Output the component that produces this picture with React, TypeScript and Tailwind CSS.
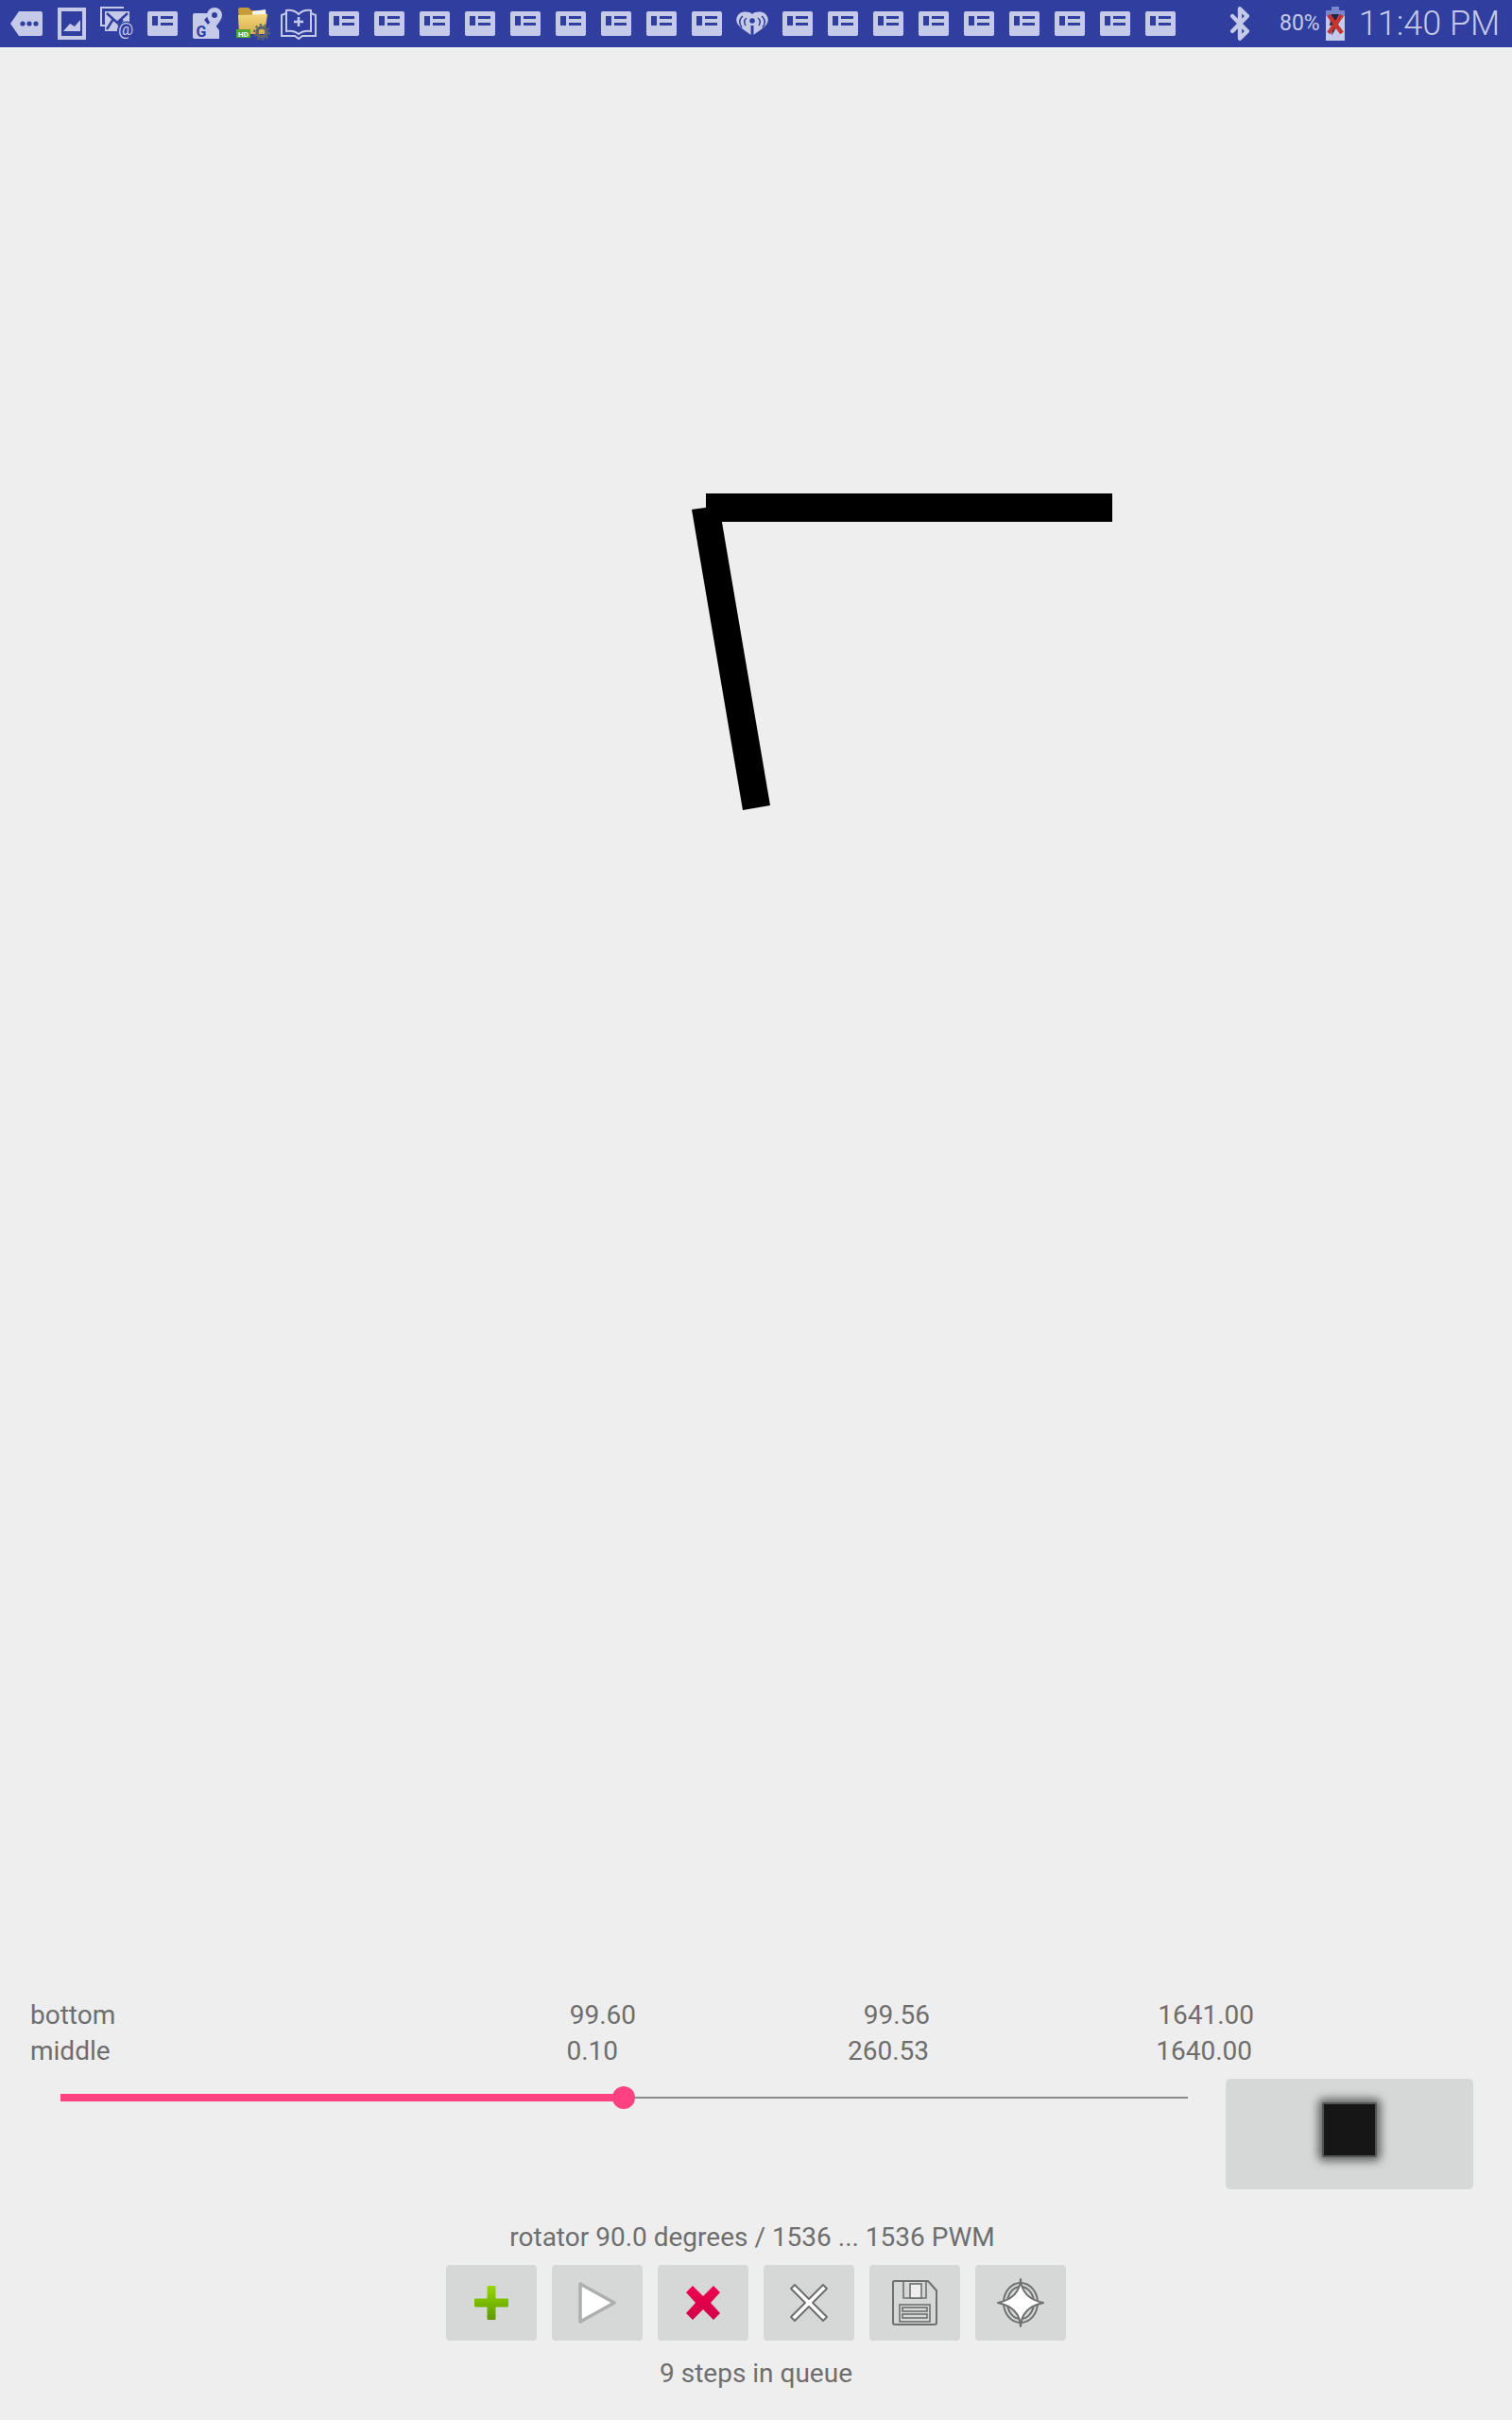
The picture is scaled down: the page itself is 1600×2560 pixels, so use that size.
import { Bluetooth } from 'lucide-react'

const ICON = '#c5cae9'
const BAR = '#303f9f'

type Reading = { label: string; a: string; b: string; c: string; aw: string; bw: string; cw: string }

const READINGS: Reading[] = [
  { label: 'bottom', a: '99.60', b: '99.56', c: '1641.00', aw: 'w-[641px]', bw: 'w-[311px]', cw: 'w-[343px]' },
  { label: 'middle', a: '0.10', b: '260.53', c: '1640.00', aw: 'w-[622px]', bw: 'w-[329px]', cw: 'w-[342px]' },
]

function CardIcon() {
  return (
    <svg width="32" height="26" viewBox="0 0 32 26">
      <rect width="32" height="26" rx="2" fill={ICON} />
      <rect x="5" y="5" width="6" height="10" fill={BAR} />
      <rect x="14" y="5" width="13" height="3" fill={BAR} />
      <rect x="14" y="12" width="13" height="3" fill={BAR} />
    </svg>
  )
}

function DotsIcon() {
  return (
    <svg width="36" height="28" viewBox="0 0 36 28">
      <path d="M10 1H33a2 2 0 0 1 2 2V25a2 2 0 0 1-2 2H10L1 14Z" fill={ICON} />
      <circle cx="14" cy="14" r="2.6" fill={BAR} />
      <circle cx="21" cy="14" r="2.6" fill={BAR} />
      <circle cx="28" cy="14" r="2.6" fill={BAR} />
    </svg>
  )
}

function PictureIcon() {
  return (
    <svg width="30" height="34" viewBox="0 0 30 34">
      <path fillRule="evenodd" d="M0 0H30V34H0ZM4 4V30H26V4Z" fill={ICON} />
      <path d="M6 25L13 17L18 20L24 13V25Z" fill={ICON} />
    </svg>
  )
}

function MailIcon() {
  return (
    <svg width="36" height="36" viewBox="0 0 36 36">
      <path d="M0 0H25V2H2V19H5V21H0Z" fill={ICON} />
      <path d="M5 5H31V16A10 10 0 0 0 18 26H5Z" fill={ICON} />
      <path d="M7 7L18 17L29 7M7 24L14 13M24 14L19 20" stroke={BAR} strokeWidth="2.5" fill="none" />
      <text x="27" y="30" textAnchor="middle" fontSize="18" fontFamily="Roboto, sans-serif" fill={ICON}>@</text>
    </svg>
  )
}

function MapsIcon() {
  return (
    <svg width="32" height="34" viewBox="0 0 32 34">
      <path d="M2 6H19L12 13L28 33H2a2 2 0 0 1-2-2V8a2 2 0 0 1 2-2Z" fill={ICON} />
      <path d="M20 14L28 24V33H26L15 19Z" fill={ICON} />
      <path d="M23 0A8 8 0 0 1 31 8C31 13 26 17 23 23C20 17 15 13 15 8A8 8 0 0 1 23 0Z" fill={ICON} />
      <circle cx="23" cy="8" r="3" fill={BAR} />
      <text x="9" y="31" textAnchor="middle" fontSize="16" fontWeight="700" fontFamily="Roboto, sans-serif" fill={BAR}>G</text>
    </svg>
  )
}

function FolderIcon() {
  return (
    <svg width="36" height="36" viewBox="0 0 36 36">
      <defs>
        <linearGradient id="folderFill" x1="0" y1="0" x2="0" y2="1">
          <stop offset="0" stopColor="#f3d67a" />
          <stop offset="1" stopColor="#d9ae4a" />
        </linearGradient>
      </defs>
      <path d="M2 3Q2 1 5 1H13L16 4H29Q31 4 31 6V28H4Z" fill="#c69b3c" />
      <path d="M17 5L31 3L32 12L17 13Z" fill="#f4f4ea" />
      <path d="M2 9L33 8L30 29H3Z" fill="url(#folderFill)" />
      <rect x="0" y="24" width="15" height="9" fill="#58a52d" />
      <text x="7.5" y="31.5" textAnchor="middle" fontSize="8" fontWeight="700" fontFamily="Roboto, sans-serif" fill="#fff">HD</text>
      <circle cx="27" cy="27" r="5" fill="none" stroke="#5c646e" strokeWidth="3.5" />
      <circle cx="27" cy="27" r="8" fill="none" stroke="#5c646e" strokeWidth="2" strokeDasharray="2.5 2.5" />
    </svg>
  )
}

function BookIcon() {
  return (
    <svg width="38" height="34" viewBox="0 0 38 34">
      <path d="M6 6L1 8V30H15L19 33L23 30H37V8L32 6" fill="none" stroke={ICON} strokeWidth="2" />
      <path d="M6 3Q14 2 19 7Q24 2 32 3V25Q24 24 19 28Q14 24 6 25Z" fill="none" stroke={ICON} strokeWidth="2" />
      <path d="M19 10V20M14 15H24" stroke={ICON} strokeWidth="2.5" />
    </svg>
  )
}

function HeartIcon() {
  return (
    <svg width="34" height="26" viewBox="0 0 34 26">
      <path d="M17 3C20 0 26 0 30 2C34 5 35 10 32 14C29 18 22 22 17 26C12 22 5 18 2 14C-1 10 0 5 4 2C8 0 14 0 17 3Z" fill={ICON} />
      <path d="M6 17Q1 10 7 5M10 15Q7 10 11 7M28 17Q33 10 27 5M24 15Q27 10 23 7" stroke={BAR} strokeWidth="1.5" fill="none" />
      <circle cx="17" cy="10" r="2.8" fill={BAR} />
      <rect x="15.5" y="15" width="3" height="11" fill={BAR} />
    </svg>
  )
}

function BatteryIcon() {
  return (
    <svg width="20" height="36" viewBox="0 0 20 36">
      <rect x="6" y="0" width="8" height="4" fill="#7986cb" />
      <rect x="0" y="4" width="20" height="6" fill="#7986cb" />
      <rect x="0" y="10" width="20" height="26" fill={ICON} />
      <path d="M6 8H14L11 15H15L6 31L8 20H4Z" fill="#1f2547" />
      <path d="M3 9L17 28M17 9L3 28" stroke="#c9352b" strokeWidth="4.5" />
    </svg>
  )
}

function Canvas() {
  return (
    <div className="h-[2060px]">
      <svg className="block" width="1600" height="2060" viewBox="0 50 1600 2060">
        <path d="M732 539L761 535L815 852L786 857Z" fill="#000" />
        <rect x="747" y="522" width="430" height="30" fill="#000" />
      </svg>
    </div>
  )
}

function ActionButton({ children }: { children: React.ReactNode }) {
  return (
    <button className="w-24 h-20 rounded-[4px] bg-[#d6d7d7] flex items-center justify-center">
      {children}
    </button>
  )
}

export default function App() {
  const slots = [
    <DotsIcon />, <PictureIcon />, <MailIcon />, <CardIcon />, <MapsIcon />, <FolderIcon />, <BookIcon />,
    ...Array.from({ length: 9 }, () => <CardIcon />),
    <HeartIcon />,
    ...Array.from({ length: 9 }, () => <CardIcon />),
  ]

  return (
    <div className="w-[1600px] h-[2560px] flex flex-col bg-[#eeeeee] font-[Roboto,sans-serif] text-[#6e6e6e] text-[28px] overflow-hidden">
      <div className="h-[50px] bg-[#303f9f] flex items-center pl-1 text-[#c5cae9]">
        {slots.map((icon, i) => (
          <div key={i} className="w-12 h-[50px] flex items-center justify-center shrink-0">{icon}</div>
        ))}
        <Bluetooth className="ml-[41px] w-[38px] h-[38px]" strokeWidth={2.75} />
        <span className="ml-[23px] text-[23px]">80%</span>
        <span className="ml-[6px]"><BatteryIcon /></span>
        <span className="ml-[15px] text-[36px] font-light whitespace-nowrap">11:40 PM</span>
      </div>

      <Canvas />

      <div className="flex-1 pt-[3px]">
        {READINGS.map(r => (
          <div key={r.label} className="h-[38px] leading-[38px] flex pl-8">
            <span className={`${r.aw} flex justify-between`}>
              <span>{r.label}</span>
              <span>{r.a}</span>
            </span>
            <span className={`${r.bw} text-right`}>{r.b}</span>
            <span className={`${r.cw} text-right`}>{r.c}</span>
          </div>
        ))}

        <div className="flex items-start pl-16 mt-[10px]">
          <div className="relative w-[1193px] h-6 mt-2 flex items-center">
            <div className="w-[596px] h-2 bg-[#ff4081]" />
            <div className="flex-1 h-[2px] bg-[#8a8a8a]" />
            <div className="absolute left-[584px] top-0 w-6 h-6 rounded-full bg-[#ff4081]" />
          </div>
          <button className="ml-10 w-[262px] h-[117px] rounded-[5px] bg-[#d6d7d7] flex items-center justify-center">
            <span className="block mb-[10px] w-[58px] h-[58px] bg-[#161616] border-2 border-[#555555] rounded-[2px] shadow-[0_0_10px_4px_rgba(0,0,0,0.55)]" />
          </button>
        </div>

        <div className="flex flex-col items-center">
          <div className="mt-8 h-[37px] leading-[37px] pr-2">rotator 90.0 degrees / 1536 ... 1536 PWM</div>
          <div className="mt-[11px] flex gap-4">
            <ActionButton>
              <svg width="36" height="36" viewBox="0 0 36 36">
                <defs>
                  <linearGradient id="plusFill" x1="0" y1="0" x2="0" y2="1">
                    <stop offset="0" stopColor="#96d800" />
                    <stop offset="1" stopColor="#5c9a00" />
                  </linearGradient>
                </defs>
                <path d="M13.5 1a1 1 0 0 1 1-1h7a1 1 0 0 1 1 1V13.5H35a1 1 0 0 1 1 1v7a1 1 0 0 1-1 1H22.5V35a1 1 0 0 1-1 1h-7a1 1 0 0 1-1-1V22.5H1a1 1 0 0 1-1-1v-7a1 1 0 0 1 1-1H13.5Z" fill="url(#plusFill)" />
              </svg>
            </ActionButton>
            <ActionButton>
              <svg width="42" height="46" viewBox="0 0 42 46">
                <path d="M3 3L39 23L3 43Z" fill="#fff" stroke="#aeaeae" strokeWidth="3.5" strokeLinejoin="round" />
              </svg>
            </ActionButton>
            <ActionButton>
              <svg width="40" height="38" viewBox="0 0 40 38">
                <defs>
                  <linearGradient id="crossFill" x1="0" y1="0" x2="0" y2="1">
                    <stop offset="0" stopColor="#f0004f" />
                    <stop offset="1" stopColor="#cf0048" />
                  </linearGradient>
                </defs>
                <path d="M2 8L9 1L20 12L31 1L38 8L28 19L38 30L31 37L20 26L9 37L2 30L12 19Z" fill="url(#crossFill)" />
              </svg>
            </ActionButton>
            <ActionButton>
              <svg width="42" height="42" viewBox="0 0 42 42">
                <path d="M2 6L6 2L21 17L36 2L40 6L25 21L40 36L36 40L21 25L6 40L2 36L17 21Z" fill="#fff" stroke="#6f6f6f" strokeWidth="2" strokeLinejoin="round" />
              </svg>
            </ActionButton>
            <ActionButton>
              <svg width="48" height="48" viewBox="0 0 48 48" fill="none" stroke="#6f6f6f" strokeWidth="1.6">
                <path d="M2 1H38L47 11V45a2 2 0 0 1-2 2H3a2 2 0 0 1-2-2V2Z" strokeWidth="2" />
                <path d="M12 1V19H36V1" />
                <rect x="19" y="4" width="12" height="15" fill="#eeeeee" />
                <rect x="8" y="26" width="32" height="18" />
                <rect x="11" y="29" width="26" height="4" />
                <rect x="11" y="36" width="26" height="4" />
              </svg>
            </ActionButton>
            <ActionButton>
              <svg width="50" height="52" viewBox="0 0 50 52" fill="none" stroke="#707070" strokeWidth="2">
                <ellipse cx="25" cy="26" rx="18" ry="21" />
                <ellipse cx="25" cy="26" rx="14" ry="17" />
                <path d="M25 1Q26 21 49 26Q26 31 25 51Q24 31 1 26Q24 21 25 1Z" fill="#fff" strokeWidth="2" strokeLinejoin="round" />
              </svg>
            </ActionButton>
          </div>
          <div className="mt-4 h-[37px] leading-[37px]">9 steps in queue</div>
        </div>
      </div>
    </div>
  )
}
